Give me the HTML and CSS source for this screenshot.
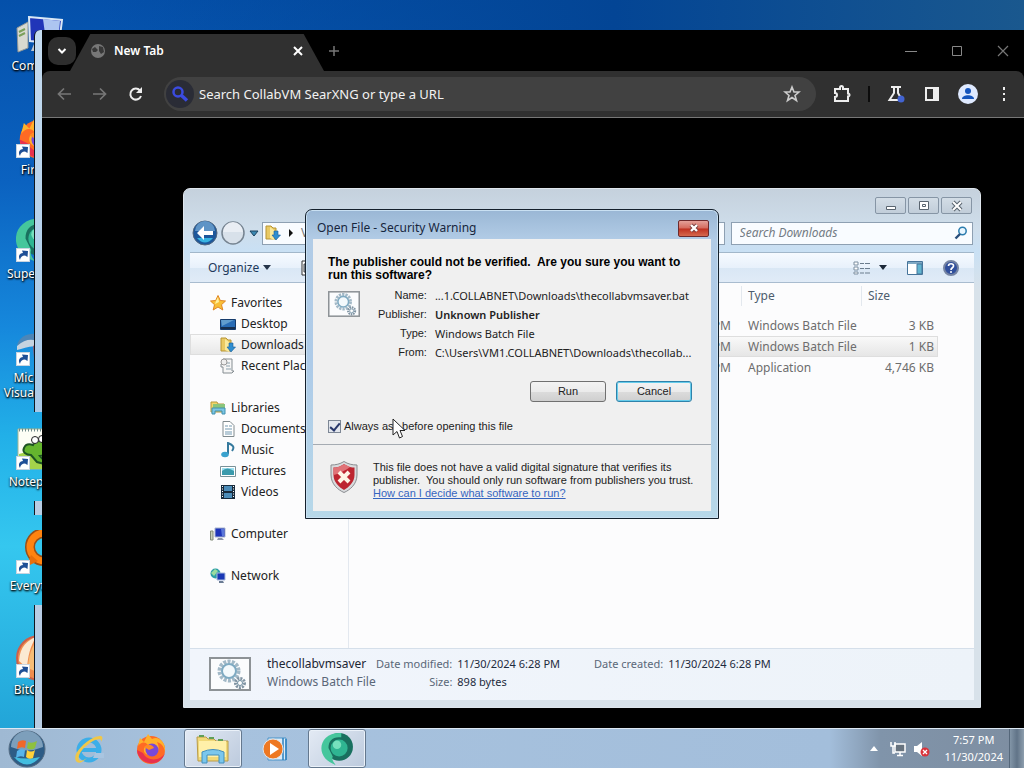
FILE: index.html
```html
<!DOCTYPE html>
<html lang="en">
<head>
    <meta charset="UTF-8">
    <meta name="viewport" content="width=device-width, initial-scale=1.0">
    <title>Desktop</title>
    <link rel="stylesheet" href="styles.css">
</head>
<body>
    <!-- Shared symbols -->
    <svg class="symbols" width="0" height="0" aria-hidden="true">
        <symbol id="shortcut" viewBox="0 0 14 14">
            <rect x="0.5" y="0.5" width="13" height="13" fill="#fff" stroke="#c8d4e0"/>
            <path d="M4 12C1.500 8 4 5 7 5L6 2.500L12 3L11.500 9L9 7.500C6 7.500 4.500 9 4 12Z" fill="#1e4f96"/>
        </symbol>
        <symbol id="gears" viewBox="0 0 42 34">
            <rect x="1" y="1" width="40" height="32" fill="#fbfcfd" stroke="#8d9296" stroke-width="2"/>
            <circle cx="20" cy="14" r="9.500" fill="none" stroke="#a3b9c7" stroke-width="4" stroke-dasharray="3 1.300"/>
            <circle cx="20" cy="14" r="7" fill="#f3f9fc" stroke="#7eaac2" stroke-width="2"/>
            <circle cx="31" cy="26" r="4.500" fill="none" stroke="#8094a3" stroke-width="3" stroke-dasharray="2 1"/>
            <circle cx="31" cy="26" r="2.500" fill="#fff" stroke="#6d8da0"/>
        </symbol>
        <symbol id="firefox" viewBox="0 0 32 32">
            <circle cx="16" cy="17" r="14" fill="#ff6a24"/>
            <path d="M3 13L5 5L9 9L13 1L17 6C24 2 31 10 30 19C29 12 25 10 22 9C27 18 20 25 13 22C7 20 8 13 13 12C10 8 6 9 3 13Z" fill="#ffb12b"/>
            <path d="M2 17C3 32 25 36 30 20C26 28 12 29 8 20Z" fill="#e8314e"/>
            <circle cx="17" cy="17" r="6.500" fill="#7a48d8"/>
            <path d="M9 14C13 10 18 12 19 15L14 17Z" fill="#ff8a24"/>
        </symbol>
        <symbol id="supermium" viewBox="0 0 32 32">
            <circle cx="18" cy="14" r="13" fill="#19705f"/>
            <path d="M20 1C2 0 -3 16 5 25C8 28 12 30 15 31C12 28 11 25 12 23L8 15C8 8 12 4 20 5Z" fill="#45c69c"/>
            <circle cx="18" cy="15" r="8" fill="#2fb592"/>
            <circle cx="16" cy="12" r="4" fill="#76e0bd"/>
        </symbol>
        <symbol id="pc" viewBox="0 0 48 40">
            <path d="M1 14L12 8V34L2 38Z" fill="#d8d9d0" stroke="#8f9698"/>
            <path d="M3 18L9 15M3 22L9 19" stroke="#7ba05a" stroke-width="2"/>
            <path d="M13 3L46 6L43 30L14 27Z" fill="#2035b8" stroke="#d9e7f5" stroke-width="2"/>
            <path d="M27 5L44 7L42 28L30 27Z" fill="#adc5f1"/>
            <path d="M18 30H33L37 37H15Z" fill="#bdc7d1"/>
        </symbol>
        <symbol id="folder-down" viewBox="0 0 16 16">
            <path d="M1 1H6L8 3H11V14H1Z" fill="#e9c963" stroke="#b89535"/>
            <path d="M5 2L9 5V15L5 13Z" fill="#f8e89b"/>
            <path d="M9 6H13V10H15.500L11 15L7 10H9Z" fill="#2f8ed0" stroke="#176098" stroke-width="0.600"/>
        </symbol>
    </svg>

    <div class="screen">
        <main class="desktop">
            <ul class="shortcuts">
                <li class="shortcut"><svg class="art" viewBox="0 0 48 40"><use href="#pc"/></svg><span>Computer</span></li>
                <li class="shortcut"><svg class="art" viewBox="0 0 48 48"><use href="#firefox" x="1" y="2" width="44" height="44"/><use href="#shortcut" x="0" y="30" width="14" height="14"/></svg><span>Firefox</span></li>
                <li class="shortcut"><svg class="art" viewBox="0 0 48 48"><use href="#supermium" x="-2" y="-1" width="46" height="46"/><use href="#shortcut" x="0" y="30" width="14" height="14"/></svg><span>Supermium</span></li>
                <li class="shortcut"><svg class="art" viewBox="0 0 48 48"><path d="M1 23C5 9 26 8 32 20L22 24Z" fill="#4c86b8"/><path d="M1 24C12 14 24 17 30 27C18 21 9 26 1 28Z" fill="#c6d3e0"/><path d="M17 24L28 18L30 40L18 36Z" fill="#9a5670"/><use href="#shortcut" x="0" y="30" width="14" height="14"/></svg><span>Microsoft Visual Studio</span></li>
                <li class="shortcut"><svg class="art" viewBox="0 0 48 48"><path d="M2 3H44V43H2Z" fill="#fdfef5" stroke="#a5b694"/><path d="M3 4H43" stroke="#718c8c" stroke-width="3" stroke-dasharray="1 2"/><path d="M3 28L18 24L43 35V43H3Z" fill="#a4d34b"/><path d="M8 22C10 17 14 18 17 19C19 14 26 14 29 18C37 19 35 29 24 30L32 39L21 36L15 29C10 29 6 26 8 22Z" fill="#65b52e" stroke="#1d5423" stroke-width="2"/><circle cx="19" cy="14" r="3.500" fill="#fff" stroke="#222"/><circle cx="26" cy="13" r="3.500" fill="#fff" stroke="#222"/><use href="#shortcut" x="0" y="30" width="14" height="14"/></svg><span>Notepad++</span></li>
                <li class="shortcut"><svg class="art" viewBox="0 0 48 48"><circle cx="28" cy="17" r="14" fill="none" stroke="#985018" stroke-width="10"/><circle cx="28" cy="17" r="14" fill="none" stroke="#ff8310" stroke-width="7"/><path d="M15 25L22 31L10 37Z" fill="#e86f0c"/><use href="#shortcut" x="0" y="30" width="14" height="14"/></svg><span>Everything</span></li>
                <li class="shortcut"><svg class="art" viewBox="0 0 48 48"><circle cx="23" cy="24" r="22" fill="#f08e50" stroke="#cb614b" stroke-width="2"/><path d="M3 27C4 12 12 6 20 3C14 13 12 22 11 34Z" fill="#fbe9d2"/><path d="M12 34C13 17 18 8 25 3V40Z" fill="#f6bd75"/><use href="#shortcut" x="0" y="30" width="14" height="14"/></svg><span>BitComet</span></li>
            </ul>

            <div class="frame-edge edge-top"></div>
            <div class="frame-edge edge-middle"></div>
            <div class="frame-edge edge-bottom"></div>

            <section class="browser">
                <div class="tabstrip">
                    <button class="tab-search" aria-label="Search tabs"><svg width="12" height="12" viewBox="0 0 12 12"><path d="M2.500 4L6 7.500L9.500 4" fill="none" stroke="#fff" stroke-width="2"/></svg></button>
                    <div class="tab">
                        <svg width="16" height="16" viewBox="0 0 16 16"><circle cx="8" cy="8" r="7" fill="#777"/><path d="M2 6L5 4L8 7L6 9H3ZM9 3L13 4L14 9L11 11L9 8Z" fill="#383838"/></svg>
                        <span>New Tab</span>
                        <button class="tab-close" aria-label="Close tab"><svg width="10" height="10" viewBox="0 0 10 10"><path d="M1 1L9 9M9 1L1 9" stroke="#fff" stroke-width="2"/></svg></button>
                    </div>
                    <button class="new-tab" aria-label="New tab"><svg width="12" height="12" viewBox="0 0 12 12"><path d="M6 1V11M1 6H11" stroke="#777" stroke-width="1.500"/></svg></button>
                    <div class="browser-controls">
                        <button aria-label="Minimize"><svg width="12" height="12" viewBox="0 0 12 12"><path d="M0 6.500H12" stroke="#888"/></svg></button>
                        <button aria-label="Maximize"><svg width="12" height="12" viewBox="0 0 12 12"><path d="M1.500 1.500H10.500V10.500H1.500Z" fill="none" stroke="#888"/></svg></button>
                        <button aria-label="Close"><svg width="12" height="12" viewBox="0 0 12 12"><path d="M1 1L11 11M11 1L1 11" stroke="#777" stroke-width="1.200"/></svg></button>
                    </div>
                </div>
                <div class="browser-toolbar">
                    <button aria-label="Back"><svg width="16" height="16" viewBox="0 0 16 16"><path d="M15 8H3M8 2.500L2.500 8L8 13.500" fill="none" stroke="#777" stroke-width="1.700"/></svg></button>
                    <button aria-label="Forward"><svg width="16" height="16" viewBox="0 0 16 16"><path d="M1 8H13M8 2.500L13.500 8L8 13.500" fill="none" stroke="#777" stroke-width="1.700"/></svg></button>
                    <button aria-label="Reload"><svg width="16" height="16" viewBox="0 0 16 16"><path d="M13 10A5.500 5.500 0 1 1 12 4.500" fill="none" stroke="#eee" stroke-width="2"/><path d="M14 1V7H8Z" fill="#eee"/></svg></button>
                    <div class="omnibox">
                        <span class="engine"><svg width="18" height="18" viewBox="0 0 18 18"><circle cx="7" cy="7" r="4.500" fill="none" stroke="#3b4be0" stroke-width="2.500"/><path d="M10.500 10.500L16 15.500" stroke="#3b4be0" stroke-width="3.500"/></svg></span>
                        <input class="url" type="text" aria-label="Address" placeholder="Search CollabVM SearXNG or type a URL">
                        <button aria-label="Bookmark"><svg width="18" height="18" viewBox="0 0 18 18"><path d="M9 2L11 7H16L12 10.500L13.500 15.500L9 12.500L4.500 15.500L6 10.500L2 7H7Z" fill="none" stroke="#ccc" stroke-width="1.600"/></svg></button>
                    </div>
                    <div class="browser-actions">
                        <button aria-label="Extensions"><svg width="20" height="20" viewBox="0 0 20 20"><path d="M3 5H8V3.500A1.500 1.500 0 0 1 11 3.500V5H16V9.500A1.500 1.500 0 0 1 16 12.500V17H3V13A2 2 0 0 0 3 9Z" fill="none" stroke="#eee" stroke-width="2"/></svg></button>
                        <i class="divider"></i>
                        <button aria-label="Experiments"><svg width="20" height="20" viewBox="0 0 20 20"><path d="M5 3H15M8 3V9L3.500 16H16L12 9V3" fill="none" stroke="#eee" stroke-width="2"/><circle cx="15" cy="15" r="3.500" fill="#4263d0"/></svg></button>
                        <button aria-label="Side panel"><svg width="16" height="16" viewBox="0 0 16 16"><path d="M2 2H14V14H2Z" fill="none" stroke="#eee" stroke-width="2"/><path d="M9 2H15V14H9Z" fill="#eee"/></svg></button>
                        <button aria-label="Profile"><svg width="20" height="20" viewBox="0 0 20 20"><circle cx="10" cy="10" r="10" fill="#dfeaff"/><circle cx="10" cy="7" r="3" fill="#1555bd"/><path d="M4 15C4 10 16 10 16 15Z" fill="#1555bd"/></svg></button>
                        <button aria-label="Menu"><svg width="16" height="16" viewBox="0 0 16 16"><path d="M7 1H9V4H7ZM7 7H9V9H7ZM7 12H9V15H7Z" fill="#eee"/></svg></button>
                    </div>
                </div>
            </section>

            <section class="explorer">
                <div class="explorer-controls">
                    <button aria-label="Minimize"><svg width="14" height="12" viewBox="0 0 14 12"><path d="M2.500 6.500H11.500V9.500H2.500Z" fill="#fff" stroke="#59646f"/></svg></button>
                    <button aria-label="Restore"><svg width="14" height="12" viewBox="0 0 14 12"><path d="M2.500 1.500H11.500V9.500H2.500Z" fill="#fff" stroke="#59646f"/><path d="M5.500 4.500H8.500V6.500H5.500Z" fill="none" stroke="#59646f"/></svg></button>
                    <button aria-label="Close"><svg width="14" height="12" viewBox="0 0 14 12"><path d="M3 2L11 10M11 2L3 10" stroke="#59646f" stroke-width="4"/><path d="M3 2L11 10M11 2L3 10" stroke="#fff" stroke-width="2"/></svg></button>
                </div>
                <div class="nav-row">
                    <button class="round" aria-label="Back"><svg width="26" height="26" viewBox="0 0 26 26"><circle cx="13" cy="13" r="12" fill="#1c579b" stroke="#52677e"/><path d="M3 11A10 10 0 0 1 23 11Z" fill="#5e94c6"/><path d="M5 18Q13 27 21 18Z" fill="#37b4e2"/><path d="M5 13L12 6V11H21V15H12V20Z" fill="#fff"/></svg></button>
                    <button class="round" aria-label="Forward"><svg width="26" height="26" viewBox="0 0 26 26"><circle cx="13" cy="13" r="11" fill="#d8e1ea" stroke="#768491" stroke-width="1.500"/><path d="M3 12A10 10 0 0 1 23 12Z" fill="#e9eef4"/></svg></button>
                    <button class="recent" aria-label="Recent pages"><svg width="10" height="8" viewBox="0 0 10 8"><path d="M1 2H9L5 7Z" fill="#3b88b2" stroke="#1c435f"/></svg></button>
                    <div class="address">
                        <svg width="16" height="16" viewBox="0 0 16 16"><use href="#folder-down"/></svg>
                        <svg width="8" height="8" viewBox="0 0 8 8"><path d="M2 0L6 4L2 8Z" fill="#111"/></svg>
                        <span>V</span>
                    </div>
                    <div class="search">
                        <input type="text" aria-label="Search Downloads" placeholder="Search Downloads">
                        <svg width="14" height="14" viewBox="0 0 14 14"><circle cx="8.500" cy="5" r="3.700" fill="#e8f6ff" stroke="#2a7cae" stroke-width="1.500"/><path d="M6 8L1.500 12.500" stroke="#294f7c" stroke-width="2.400"/></svg>
                    </div>
                </div>
                <div class="commands">
                    <button class="organize">Organize <svg width="8" height="5" viewBox="0 0 8 5"><path d="M0 0H8L4 5Z" fill="#25344a"/></svg></button>
                    <button class="open" aria-label="Open"><svg width="14" height="16" viewBox="0 0 14 16"><path d="M1 1H13V15H1Z" fill="#fff" stroke="#333"/><path d="M3 4H11V12H3Z" fill="#a1b0c0" stroke="#444"/></svg></button>
                    <div class="command-icons">
                        <button class="views" aria-label="Change view"><svg width="18" height="14" viewBox="0 0 18 14"><path d="M1 1H5V4H1ZM1 6H5V9H1ZM1 11H5V13H1Z" fill="#fff" stroke="#7c8fa1"/><path d="M7 2.500H11M12 2.500H17M7 7.500H11M12 7.500H17M7 12H11M12 12H17" stroke="#6b7c8d"/></svg><svg width="8" height="5" viewBox="0 0 8 5"><path d="M0 0H8L4 5Z" fill="#1c2838"/></svg></button>
                        <button aria-label="Preview pane"><svg width="16" height="14" viewBox="0 0 16 14"><path d="M0.500 0.500H15.500V13.500H0.500Z" fill="#fff" stroke="#46749a"/><path d="M1 2H15" stroke="#80a9c4" stroke-width="2"/><path d="M10 3H15V13H10Z" fill="#62b5d0" stroke="#46749a"/></svg></button>
                        <button aria-label="Help"><svg width="16" height="16" viewBox="0 0 16 16"><circle cx="8" cy="8" r="7" fill="#304f9c" stroke="#7584a3" stroke-width="2"/><path d="M5.500 6C5.500 3 11 3 10.500 6C10.500 8 8 7.500 8 10" fill="none" stroke="#fff" stroke-width="1.700"/><circle cx="8" cy="12" r="1" fill="#fff"/></svg></button>
                    </div>
                </div>
                <div class="explorer-body">
                    <nav class="places">
                        <ul>
                            <li><svg viewBox="0 0 16 16"><path d="M8 0.500L10.300 5.500L15.500 6L11.500 9.700L12.800 15L8 12L3.200 15L4.500 9.700L0.500 6L5.700 5.500Z" fill="#f8bf37" stroke="#e08523"/><path d="M8 2L9 7L5 9L6 6Z" fill="#fff0a0"/></svg>Favorites</li>
                            <li class="child"><svg viewBox="0 0 16 16"><path d="M0.500 3.500H15.500V13.500H0.500Z" fill="#286cb5" stroke="#163b6b"/><path d="M1 4H14L2 10Z" fill="#619dce"/><path d="M1 12H15" stroke="#172f4e" stroke-width="2"/></svg>Desktop</li>
                            <li class="child current"><svg viewBox="0 0 16 16"><use href="#folder-down"/></svg>Downloads</li>
                            <li class="child"><svg viewBox="0 0 16 16"><path d="M3 1H12V13H14L12 15H3V9H1V6H5" fill="#f6f6f6" stroke="#858d92"/><path d="M6 5H10M6 8H10M6 11H11" stroke="#8ba0ac"/><circle cx="4" cy="4" r="3" fill="#eee" stroke="#999"/></svg>Recent Places</li>
                        </ul>
                        <ul>
                            <li><svg viewBox="0 0 16 16"><path d="M1 2H7L8 4H14V12H1Z" fill="#f0d66c" stroke="#b5973c"/><path d="M3 4H15V8H3Z" fill="#8bc57b"/><path d="M2 8H15V14H12V11H5V14H2Z" fill="#7bc6e5" stroke="#4390ae"/></svg>Libraries</li>
                            <li class="child"><svg viewBox="0 0 16 16"><path d="M3 0.500H10L14 4.500V15.500H3Z" fill="#fff" stroke="#808a8e"/><path d="M5 5H8M5 8H12M5 11H12M5 13H12M9 5H12" stroke="#759ab2" stroke-width="1.200"/></svg>Documents</li>
                            <li class="child"><svg viewBox="0 0 16 16"><path d="M8 12V1C13 3 15 5 12 9" fill="none" stroke="#35799d" stroke-width="2"/><ellipse cx="5" cy="12.500" rx="3.800" ry="2.800" fill="#3aa2ce"/></svg>Music</li>
                            <li class="child"><svg viewBox="0 0 16 16"><path d="M0.500 3.500H15.500V13.500H0.500Z" fill="#fff" stroke="#799198"/><path d="M2 5H14V12H2Z" fill="#3b9aac"/><path d="M2 8Q7 3 14 8V5H2Z" fill="#9ddff0"/></svg>Pictures</li>
                            <li class="child"><svg viewBox="0 0 16 16"><path d="M1 1H15V15H1Z" fill="#192b3c"/><path d="M4 2H12V7H4ZM4 9H12V14H4Z" fill="#4d8db9"/><path d="M2.500 2V14M13.500 2V14" stroke="#fff" stroke-dasharray="1 1.500"/></svg>Videos</li>
                        </ul>
                        <ul>
                            <li><svg viewBox="0 0 16 16"><path d="M0.500 5H3V14H0.500Z" fill="#cbd2bd" stroke="#808a78"/><path d="M5 2H15V11H5Z" fill="#1e35ba" stroke="#a8b5ce"/><path d="M11 3H14V10H12Z" fill="#5976da"/><path d="M8 12H12L14 14H7Z" fill="#8d96aa"/></svg>Computer</li>
                        </ul>
                        <ul>
                            <li><svg viewBox="0 0 16 16"><circle cx="5.500" cy="5.500" r="5" fill="#2a9da8"/><path d="M1 5L5 1L8 3L4 8Z" fill="#9adc9e"/><path d="M7 5H15V12H7Z" fill="#1937b5" stroke="#a9badb"/><path d="M9 13H13L14 15H9Z" fill="#6a7b93"/></svg>Network</li>
                        </ul>
                    </nav>
                    <div class="files">
                        <table>
                            <thead>
                                <tr><th class="col-name"></th><th class="col-type"><span>Type</span></th><th class="col-size"><span>Size</span></th></tr>
                            </thead>
                            <tbody>
                                <tr><td class="col-name">PM</td><td>Windows Batch File</td><td class="size">3 KB</td></tr>
                                <tr class="selected"><td class="col-name">PM</td><td>Windows Batch File</td><td class="size">1 KB</td></tr>
                                <tr><td class="col-name">PM</td><td>Application</td><td class="size">4,746 KB</td></tr>
                            </tbody>
                        </table>
                    </div>
                </div>
                <div class="details">
                    <svg width="42" height="34" viewBox="0 0 42 34"><use href="#gears"/></svg>
                    <div class="details-name"><strong>thecollabvmsaver</strong><span>Windows Batch File</span></div>
                    <dl>
                        <dt>Date modified:</dt><dd>11/30/2024 6:28 PM</dd>
                        <dt>Size:</dt><dd>898 bytes</dd>
                    </dl>
                    <dl>
                        <dt>Date created:</dt><dd>11/30/2024 6:28 PM</dd>
                    </dl>
                </div>
            </section>

            <section class="dialog" role="dialog" aria-labelledby="dialog-title">
                <header class="dialog-title">
                    <span id="dialog-title">Open File - Security Warning</span>
                    <button class="dialog-close" aria-label="Close"><svg width="12" height="10" viewBox="0 0 12 10"><path d="M3 2L9 8M9 2L3 8" stroke="#753c3c" stroke-width="4"/><path d="M3 2L9 8M9 2L3 8" stroke="#fff" stroke-width="2.400"/></svg></button>
                </header>
                <div class="dialog-body">
                    <div class="dialog-main">
                        <h1>The publisher could not be verified.&nbsp; Are you sure you want to run this software?</h1>
                        <div class="file-info">
                            <svg width="32" height="26" viewBox="0 0 42 34"><use href="#gears"/></svg>
                            <dl>
                                <dt>Name:</dt><dd>...1.COLLABNET\Downloads\thecollabvmsaver.bat</dd>
                                <dt>Publisher:</dt><dd class="strong">Unknown Publisher</dd>
                                <dt>Type:</dt><dd>Windows Batch File</dd>
                                <dt>From:</dt><dd>C:\Users\VM1.COLLABNET\Downloads\thecollab...</dd>
                            </dl>
                        </div>
                        <div class="dialog-buttons">
                            <button>Run</button>
                            <button class="default">Cancel</button>
                        </div>
                        <label class="ask"><input type="checkbox" checked><span>Always ask before opening this file</span></label>
                    </div>
                    <div class="dialog-note">
                        <svg width="28" height="32" viewBox="0 0 28 32"><path d="M14 0.500C18 3 22 4 27 4V14C27 23 20 29 14 31.500C8 29 1 23 1 14V4C6 4 10 3 14 0.500Z" fill="#d9dbdd" stroke="#8a8d90"/><path d="M14 3C18 6 22 6.500 24.500 6.500V14C24.500 21 19 26 14 29C9 26 3.500 21 3.500 14V6.500C6 6.500 10 6 14 3Z" fill="#bd2530"/><path d="M14 3C10 6 6 6.500 3.500 6.500V14C9 13 16 9 20 6Z" fill="#e07277"/><path d="M9 11L19 21M19 11L9 21" stroke="#fff5e5" stroke-width="4"/></svg>
                        <p>This file does not have a valid digital signature that verifies its publisher.&nbsp; You should only run software from publishers you trust.<br><a href="#">How can I decide what software to run?</a></p>
                    </div>
                </div>
            </section>

            <svg class="cursor" width="14" height="21" viewBox="0 0 14 21"><path d="M1 1V17L5 13.500L7.500 20L10.500 18.500L8 12.500H13Z" fill="#fff" stroke="#222"/></svg>
        </main>

        <footer class="taskbar">
            <button class="start" aria-label="Start"><svg width="38" height="38" viewBox="0 0 38 38"><circle cx="19" cy="19" r="18" fill="#2d5c86" stroke="#566c82"/><path d="M3 17A16 16 0 0 1 35 17Q19 24 3 17Z" fill="#7d9fbb"/><path d="M6 27Q19 42 32 27Q19 30 6 27Z" fill="#43bddf"/><path d="M10 12Q14 9 18 11L17 18Q13 16 9 19Z" fill="#f0682b"/><path d="M20 12Q24 14 29 11L27 18Q23 21 19 18Z" fill="#8ec13e"/><path d="M9 21Q13 18 17 20L16 27Q12 25 8 28Z" fill="#57b5ec"/><path d="M19 20Q23 23 27 20L25 28Q21 30 18 27Z" fill="#ffd13b"/></svg></button>
            <button class="task" aria-label="Internet Explorer"><svg width="32" height="32" viewBox="0 0 32 32"><circle cx="16" cy="17" r="10" fill="none" stroke="#3caee8" stroke-width="5"/><path d="M8 17H27" stroke="#3caee8" stroke-width="4"/><path d="M22 20H31V25H20Z" fill="#a9c5e0"/><path d="M3 28C-1 22 10 10 20 5C27 2 32 2 28 9C29 5 24 6 20 8C10 14 4 22 6 27C8 29 11 27 14 25C9 30 5 31 3 28Z" fill="#f0c748"/></svg></button>
            <button class="task" aria-label="Firefox"><svg width="32" height="32" viewBox="0 0 32 32"><use href="#firefox"/></svg></button>
            <button class="task active" aria-label="Windows Explorer"><svg width="34" height="32" viewBox="0 0 34 32"><path d="M1 4H10L12 6H18L20 8H32V28H2Z" fill="#f1d978" stroke="#b99b48"/><path d="M3 8H30V24H3Z" fill="#fff0a9"/><path d="M3 3H8M13 5H18M22 7H27" stroke="#5f9f57" stroke-width="2"/><path d="M6 19Q17 14 28 19V30H23V22H11V30H6Z" fill="#7bc7ed" stroke="#438fbd"/></svg></button>
            <button class="task" aria-label="Media Player"><svg width="28" height="26" viewBox="0 0 28 26"><path d="M7 2H25V24H7Z" fill="#dcecf8" stroke="#4893c9"/><path d="M22 2V24M25 3V24" stroke="#2b80be" stroke-width="1.500"/><circle cx="12" cy="13" r="10" fill="#ee7822" stroke="#e2e4e8"/><path d="M9 7L18 13L9 19Z" fill="#fff"/></svg></button>
            <button class="task active" aria-label="Supermium"><svg width="34" height="34" viewBox="0 0 32 32"><use href="#supermium"/></svg></button>
            <div class="tray">
                <svg width="8" height="5" viewBox="0 0 8 5"><path d="M4 0L8 5H0Z" fill="#fff"/></svg>
                <svg width="16" height="16" viewBox="0 0 16 16"><path d="M5 3H15V11H5Z" fill="#67737f" stroke="#fff" stroke-width="1.500"/><path d="M7 14.500H13M10 11V14M1 1V5H5V1M3 5V12H5" fill="none" stroke="#fff" stroke-width="1.500"/></svg>
                <svg width="16" height="16" viewBox="0 0 16 16"><path d="M0 5H3L8 1V15L3 11H0Z" fill="#fff"/><circle cx="11" cy="11" r="4.500" fill="#d9333b"/><path d="M9 9L13 13M13 9L9 13" stroke="#fff" stroke-width="1.300"/></svg>
                <div class="clock"><span>7:57 PM</span><span>11/30/2024</span></div>
                <button class="show-desktop" aria-label="Show desktop"></button>
            </div>
        </footer>
    </div>
</body>
</html>
```
FILE: styles.css
```css
* {
    box-sizing: border-box;
}

body {
    margin: 0;
    font-family: "Noto Sans", "Open Sans", sans-serif;
    font-size: 12px;
    line-height: 16px;
    color: #222;
}

button {
    display: flex;
    align-items: center;
    justify-content: center;
    padding: 0;
    border: none;
    background: none;
    font: inherit;
    color: inherit;
}

input {
    font: inherit;
    border: none;
    outline: none;
    background: none;
    min-width: 0;
    padding: 0;
}

ul, dl, dd, p, h1 {
    margin: 0;
    padding: 0;
}

ul {
    list-style: none;
}

svg {
    display: block;
    flex-shrink: 0;
}

.symbols {
    position: absolute;
}

.screen {
    display: flex;
    flex-direction: column;
    height: 100vh;
    overflow: hidden;
}

.desktop {
    position: relative;
    flex: 1;
    min-height: 0;
    overflow: hidden;
    background: linear-gradient(90deg, transparent 10%, #034595 60%, #1a588e) top / 100% 30px no-repeat,
        linear-gradient(#0450aa, #0b62c0 25%, #1688dc 45%, #22b0e8 60%, #35c7ef 75%, #22a5d8);
}

/* Desktop shortcuts */
.shortcuts {
    width: 80px;
    padding-top: 10px;
}

.shortcut {
    height: 104px;
    display: flex;
    flex-direction: column;
    align-items: center;
    text-align: center;
    color: #fff;
    line-height: 15px;
    text-shadow: 0 1px 2px #000, 1px 1px 2px #000;
}

.shortcut .art {
    width: 48px;
    height: 48px;
}

/* Window frame seen at the left of the browser */
.frame-edge {
    position: absolute;
    left: 34px;
    width: 8px;
    border-left: 1px solid #101820;
    background: #b8cde4;
}

.edge-top {
    top: 30px;
    height: 382px;
    border-top-left-radius: 6px;
    background: linear-gradient(#c5dcf0, #a9c9e8);
}

.edge-middle {
    top: 501px;
    height: 14px;
}

.edge-bottom {
    top: 605px;
    bottom: 0;
}

/* Browser */
.browser {
    position: absolute;
    inset: 30px 0 0 42px;
    background: #000;
}

.tabstrip {
    display: flex;
    align-items: center;
    height: 41px;
}

.tab-search {
    width: 28px;
    height: 28px;
    margin-left: 6px;
    border-radius: 10px;
    background: #2e2e2e;
}

.tab {
    align-self: flex-end;
    display: flex;
    align-items: center;
    gap: 8px;
    width: 254px;
    height: 37px;
    padding: 0 21px 4px 20px;
    margin-left: -6px;
    background: #303030;
    clip-path: polygon(8% 0, 92% 0, 100% 100%, 0 100%);
    color: #fff;
    font-weight: 600;
}

.tab-close {
    margin-left: auto;
}

.new-tab {
    width: 20px;
    height: 20px;
}

.browser-controls {
    display: flex;
    gap: 34px;
    margin-left: auto;
    padding-right: 15px;
}

.browser-toolbar {
    display: flex;
    align-items: center;
    height: 47px;
    padding: 0 12px 0 14px;
    gap: 20px;
    background: #303030;
    border-bottom: 1px solid #777;
    border-radius: 8px 8px 0 0;
}

.omnibox {
    flex: 1;
    display: flex;
    align-items: center;
    height: 34px;
    padding: 0 15px 0 2px;
    border-radius: 17px;
    background: #414141;
}

.engine {
    display: flex;
    align-items: center;
    justify-content: center;
    width: 28px;
    height: 28px;
    border-radius: 14px;
    background: #2a2c36;
}

.url {
    flex: 1;
    margin-left: 5px;
    font-size: 13px;
    color: #fff;
}

.url::placeholder {
    color: #f2f2f2;
    opacity: 1;
}

.browser-actions {
    display: flex;
    align-items: center;
    gap: 18px;
    margin-left: -4px;
}

.divider {
    width: 2px;
    height: 16px;
    margin: 0 -2px;
    background: #0c0c0c;
}

/* Explorer */
.explorer {
    position: absolute;
    inset: 188px 43px 20px 183px;
    display: flex;
    flex-direction: column;
    padding: 8px 6px 7px;
    border: 1px solid #dfe6ed;
    border-radius: 7px 7px 0 0;
    background: linear-gradient(#c5d1dd, #cfdeeb 40px, #c9e0f4 62px, #d8e2ea 100px);
}

.explorer-controls {
    display: flex;
    justify-content: flex-end;
    gap: 2px;
    padding-right: 2px;
}

.explorer-controls button {
    width: 31px;
    height: 17px;
    border: 1px solid #8695a5;
    border-radius: 2px;
    background: linear-gradient(#d3dde6, #c1cdd9);
}

.nav-row {
    display: flex;
    align-items: center;
    height: 38px;
    padding: 0 1px;
}

.round {
    width: 28px;
}

.recent {
    width: 14px;
    margin-right: 1px;
}

.address,
.search {
    display: flex;
    align-items: center;
    height: 23px;
    border: 1px solid #8ea0b2;
    background: #f9fcff;
}

.address {
    flex: 1;
    gap: 6px;
    padding: 0 2px;
    color: #777;
}

.search {
    width: 31%;
    margin-left: 6px;
    padding: 0 4px 0 8px;
}

.search input {
    flex: 1;
    font-style: italic;
}

.search input::placeholder {
    color: #737b83;
    opacity: 1;
}

.commands {
    display: flex;
    align-items: center;
    height: 31px;
    padding: 0 15px 0 18px;
    border-top: 1px solid #a2b7ca;
    border-bottom: 1px solid #a9bccf;
    background: linear-gradient(#f6faff, #e8f1fb 50%, #d9e7f5 51%, #e0ebf7);
    color: #1e395b;
}

.organize {
    gap: 4px;
}

.open {
    margin-left: 30px;
}

.command-icons {
    display: flex;
    align-items: center;
    gap: 20px;
    margin-left: auto;
}

.views {
    gap: 8px;
}

.explorer-body {
    flex: 1;
    display: flex;
    min-height: 0;
    background: #fcfcfd;
}

.places {
    width: 159px;
    padding-top: 9px;
    border-right: 1px solid #e3e8ef;
}

.places ul {
    margin-bottom: 21px;
}

.places li {
    display: flex;
    align-items: center;
    gap: 5px;
    height: 21px;
    padding-left: 20px;
    white-space: nowrap;
}

.places .child {
    padding-left: 30px;
}

.places .current {
    background: linear-gradient(#fafafa, #e8e8e8);
    border: 1px solid #dedede;
    padding-left: 29px;
}

.places svg {
    width: 16px;
    height: 16px;
}

.files {
    flex: 1;
    padding-right: 36px;
}

table {
    width: 100%;
    table-layout: fixed;
    border-collapse: collapse;
    color: #6d6d6d;
}

th {
    height: 32px;
    padding: 3px 0 0;
    vertical-align: top;
    text-align: left;
    font-weight: normal;
    color: #4d5c6d;
}

th span {
    display: block;
    height: 20px;
    padding-left: 6px;
    border-left: 1px solid #e3e8ee;
    line-height: 20px;
}

td {
    height: 21px;
    padding: 0 0 0 7px;
    white-space: nowrap;
}

td.col-name {
    text-align: right;
    padding-right: 10px;
}

.col-type {
    width: 120px;
}

.col-size {
    width: 77px;
}

td.size {
    text-align: right;
    padding-right: 4px;
}

.selected {
    background: linear-gradient(#fafafa, #e5e5e5);
    outline: 1px solid #dedede;
    outline-offset: -1px;
}

.details {
    display: flex;
    gap: 11px;
    height: 52px;
    padding: 8px 19px;
    border-top: 1px solid #d5dfea;
    background: linear-gradient(90deg, #f1f5fc, #edf3f9);
    line-height: 18px;
    color: #5a6778;
}

.details > svg {
    margin-right: 5px;
}

.details-name {
    display: flex;
    flex-direction: column;
    width: 98px;
    margin-top: -2px;
    white-space: nowrap;
}

.details-name strong {
    font-weight: normal;
    color: #1c2634;
}

.details dl {
    display: grid;
    grid-template-columns: auto auto;
    align-content: start;
    column-gap: 5px;
    margin-top: -2px;
    margin-right: 23px;
    font-size: 11px;
}

.details dt {
    text-align: right;
}

.details dd {
    color: #1e2b3d;
}

/* Security warning */
.dialog {
    position: absolute;
    left: 305px;
    top: 209px;
    width: 414px;
    padding: 0 7px 7px;
    border: 1px solid #14202c;
    border-radius: 7px 7px 0 0;
    background: linear-gradient(#9ab7d5, #b2cce6 30px, #aecbe8 50%, #b7d8e9);
    box-shadow: inset 0 0 0 1px #c9e0f2;
}

.dialog-title {
    display: flex;
    align-items: center;
    justify-content: space-between;
    height: 29px;
    padding: 7px 2px 0 4px;
    color: #17263d;
}

.dialog-close {
    width: 31px;
    height: 17px;
    border: 1px solid #6d2a2c;
    border-radius: 2px;
    background: linear-gradient(#e4a199, #d56b5d 48%, #bf3020 52%, #d5694e);
}

.dialog-body {
    background: #f0f0f0;
    font-family: "Liberation Sans", Arial, sans-serif;
    font-size: 11px;
    line-height: 13px;
}

.dialog-main {
    padding: 17px 19px 11px 15px;
    border-bottom: 1px solid #a5abb2;
}

.dialog h1 {
    font-size: 12px;
    line-height: 13px;
    color: #000;
}

.file-info {
    display: flex;
    gap: 18px;
    padding-top: 4px;
}

.file-info > svg {
    margin-top: 5px;
}

.file-info dl {
    display: grid;
    grid-template-columns: auto auto;
    column-gap: 8px;
    line-height: 19px;
}

.file-info dt {
    text-align: right;
}

.file-info dd {
    font-family: "Noto Sans", "Open Sans", sans-serif;
    white-space: nowrap;
}

.file-info .strong {
    font-weight: 600;
}

.dialog-buttons {
    display: flex;
    justify-content: flex-end;
    gap: 10px;
    padding-top: 19px;
}

.dialog-buttons button {
    width: 76px;
    height: 21px;
    border: 1px solid #707070;
    border-radius: 3px;
    background: linear-gradient(#f3f3f3, #ebebeb 50%, #dcdcdc 51%, #cfcfcf);
}

.dialog-buttons .default {
    border-color: #2f83ab;
    box-shadow: inset 0 0 0 1px #66cceb;
}

.ask {
    display: flex;
    align-items: center;
    gap: 3px;
    padding-top: 18px;
}

.ask input {
    appearance: none;
    width: 13px;
    height: 13px;
    margin: 0;
    border: 1px solid #7d8795;
    background: #e3e7ee;
}

.ask input:checked::after {
    content: "";
    display: block;
    width: 4px;
    height: 8px;
    margin: 0 auto;
    border: solid #27376b;
    border-width: 0 2px 2px 0;
    transform: rotate(40deg);
}

.dialog-note {
    display: flex;
    gap: 15px;
    padding: 16px 10px 11px 17px;
}

.dialog-note a {
    color: #3565c0;
}

.cursor {
    position: absolute;
    left: 392px;
    top: 418px;
}

/* Taskbar */
.taskbar {
    display: flex;
    align-items: stretch;
    gap: 4px;
    height: 40px;
    padding-left: 8px;
    border-top: 1px solid #dce8f3;
    background: linear-gradient(90deg, #9fb9d3, #a7c2de 20%, #a3bedb 81%, #8094aa 86%, #7e8ea1);
}

.start {
    width: 38px;
    margin-right: 10px;
}

.task {
    width: 58px;
}

.active {
    border: 1px solid #64788e;
    border-radius: 3px;
    background: linear-gradient(135deg, #e3eaf4, #bccadd);
    box-shadow: inset 0 0 0 1px #eaf1f9;
}

.tray {
    display: flex;
    align-items: center;
    gap: 12px;
    margin-left: auto;
    color: #fff;
}

.tray > svg + svg + svg {
    margin-left: -4px;
}

.clock {
    display: flex;
    flex-direction: column;
    align-items: center;
    gap: 1px;
    margin-left: 2px;
    font-size: 11px;
}

.show-desktop {
    align-self: stretch;
    width: 15px;
    margin-left: -6px;
    border-left: 1px solid #55677a;
    background: linear-gradient(90deg, #8295a7, #617488 50%, #8d9ead);
}
```
